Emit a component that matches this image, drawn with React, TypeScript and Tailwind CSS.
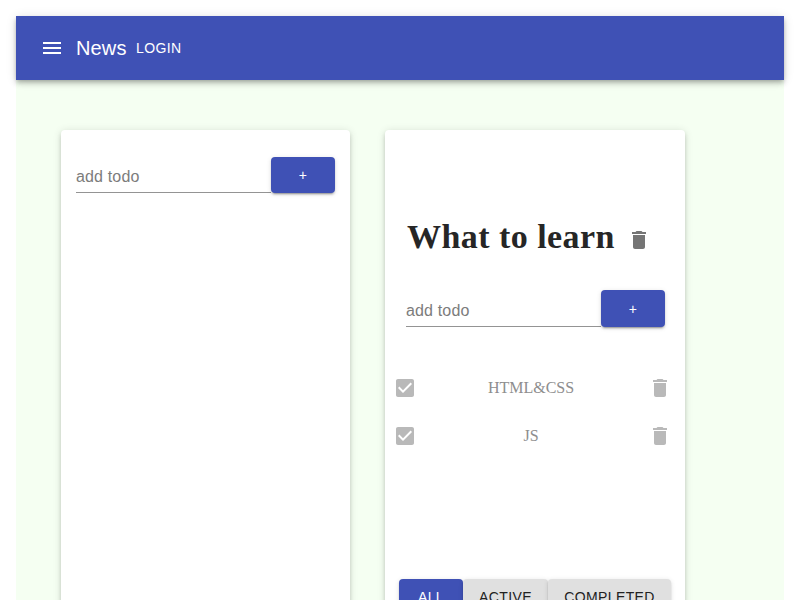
import React from "react";

const TRASH = "M6 19c0 1.1.9 2 2 2h8c1.1 0 2-.9 2-2V7H6v12zM19 4h-3.5l-1-1h-5l-1 1H5v2h14V4z";
const CHECKED =
  "M19 3H5c-1.11 0-2 .9-2 2v14c0 1.1.89 2 2 2h14c1.11 0 2-.9 2-2V5c0-1.1-.89-2-2-2zm-9 14l-5-5 1.41-1.41L10 14.17l7.59-7.59L19 8l-9 9z";
const MENU = "M3 18h18v-2H3v2zm0-5h18v-2H3v2zm0-7v2h18V6H3z";

const BUTTON_SHADOW =
  "shadow-[0px_3px_1px_-2px_rgba(0,0,0,0.2),0px_2px_2px_0px_rgba(0,0,0,0.14),0px_1px_5px_0px_rgba(0,0,0,0.12)]";
const CARD_SHADOW =
  "shadow-[0px_3px_3px_-2px_rgba(0,0,0,0.2),0px_3px_4px_0px_rgba(0,0,0,0.14),0px_1px_8px_0px_rgba(0,0,0,0.12)]";

function Icon({ path }: { path: string }) {
  return (
    <svg viewBox="0 0 24 24" className="block size-6 shrink-0 fill-current">
      <path d={path} />
    </svg>
  );
}

function AddItemForm({ buttonHeight }: { buttonHeight: string }) {
  return (
    <div className="flex items-end">
      <input
        placeholder="add todo"
        className="h-[37px] w-[195px] border-b border-[#949494] bg-transparent pt-[5px] text-base tracking-[0.15px] outline-none placeholder:text-[#7c7c7c]"
      />
      <button
        className={`${buttonHeight} w-16 rounded bg-[#3f51b5] text-sm tracking-[0.4px] text-white ${BUTTON_SHADOW}`}
      >
        +
      </button>
    </div>
  );
}

function Task({ title }: { title: string }) {
  return (
    <li className="flex h-12 items-center justify-between text-[#b9b9b9]">
      <Icon path={CHECKED} />
      <span className="pr-[3px] font-['Liberation_Serif',serif] text-base text-[#8e8e8e]">{title}</span>
      <Icon path={TRASH} />
    </li>
  );
}

export default function App() {
  return (
    <div className="h-[600px] overflow-hidden bg-white p-4 pb-0 font-['Liberation_Sans',Arial,sans-serif]">
      <div className="h-[584px] bg-[#f5fff2]">
        <header className="flex h-16 items-center bg-[#3f51b5] pl-6 text-white shadow-[0px_2px_4px_-1px_rgba(0,0,0,0.2),0px_4px_5px_0px_rgba(0,0,0,0.14),0px_1px_10px_0px_rgba(0,0,0,0.12)]">
          <Icon path={MENU} />
          <span className="ml-3 w-[52px] text-xl tracking-[0.15px]">News</span>
          <button className="ml-2 text-sm tracking-[0.4px]">LOGIN</button>
        </header>
        <main className="flex pt-[50px] pl-[45px]">
          <section className={`h-[540px] w-[289px] rounded bg-white pt-[26px] pl-[15px] ${CARD_SHADOW}`}>
            <AddItemForm buttonHeight="h-9" />
          </section>
          <section className={`ml-[35px] h-[540px] w-[300px] rounded bg-white pt-[84px] ${CARD_SHADOW}`}>
            <div className="flex h-12 items-center pl-[22px] text-[#757575]">
              <h3 className="w-[220px] pb-1 font-['Liberation_Serif',serif] text-[34px] font-bold tracking-[0.45px] whitespace-nowrap text-[#262626]">
                What to learn
              </h3>
              <div className="pt-1">
                <Icon path={TRASH} />
              </div>
            </div>
            <div className="mt-7 pl-[21px]">
              <AddItemForm buttonHeight="h-[37px]" />
            </div>
            <ul className="mt-[37px] pr-[13px] pl-2">
              <Task title="HTML&CSS" />
              <Task title="JS" />
            </ul>
            <div className="mt-[119px] flex pl-[14px] text-sm tracking-[0.4px] text-[#212121]">
              <button className={`h-9 w-16 rounded bg-[#3f51b5] text-white ${BUTTON_SHADOW}`}>ALL</button>
              <button className={`h-9 w-[85px] rounded bg-[#e0e0e0] ${BUTTON_SHADOW}`}>ACTIVE</button>
              <button className={`h-9 w-[123px] rounded bg-[#e0e0e0] ${BUTTON_SHADOW}`}>COMPLETED</button>
            </div>
          </section>
        </main>
      </div>
    </div>
  );
}
